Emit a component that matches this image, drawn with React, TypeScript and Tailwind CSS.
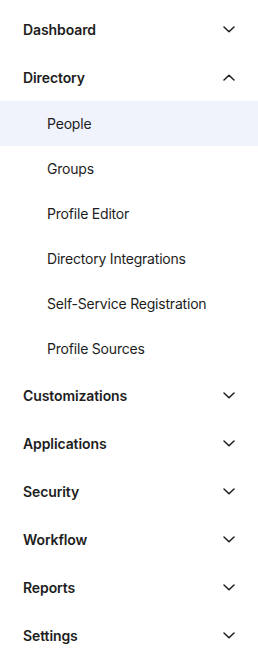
import React from 'react';

const sections = [
  { label: 'Dashboard', open: false },
  {
    label: 'Directory',
    open: true,
    items: ['People', 'Groups', 'Profile Editor', 'Directory Integrations', 'Self-Service Registration', 'Profile Sources'],
  },
  { label: 'Customizations', open: false },
  { label: 'Applications', open: false },
  { label: 'Security', open: false },
  { label: 'Workflow', open: false },
  { label: 'Reports', open: false },
  { label: 'Settings', open: false },
];

function Chevron({ up }: { up?: boolean }) {
  return (
    <svg width="12" height="7" viewBox="0 0 12 7" fill="none" className="shrink-0">
      <path
        d={up ? 'M1 6L6 1.2L11 6' : 'M1 1L6 5.8L11 1'}
        stroke="#1d1d21"
        strokeWidth="1.5"
        strokeLinecap="round"
        strokeLinejoin="round"
      />
    </svg>
  );
}

export default function App() {
  return (
    <nav className="w-[258px] h-[665px] bg-white pt-[5px] text-[#1d1d21]" style={{ fontFamily: 'Inter, "Noto Sans", sans-serif' }}>
      {sections.map((s) => (
        <div key={s.label}>
          <div className="h-[48px] flex items-center justify-between pl-[23px] pr-[23px]">
            <span className="text-[14px] font-semibold tracking-[-0.1px]">{s.label}</span>
            <Chevron up={s.open} />
          </div>
          {s.items && (
            <ul>
              {s.items.map((it, i) => (
                <li
                  key={it}
                  className={`h-[45px] flex items-center pl-[47px] text-[14px] tracking-[-0.2px] ${i === 0 ? 'bg-[#f0f3fc]' : ''}`}
                >
                  {it}
                </li>
              ))}
            </ul>
          )}
        </div>
      ))}
    </nav>
  );
}
